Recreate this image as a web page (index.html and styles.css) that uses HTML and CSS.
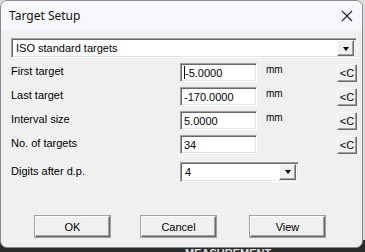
FILE: index.html
```html
<!DOCTYPE html>
<html>
<head>
<meta charset="utf-8">
<link rel="stylesheet" href="styles.css">
</head>
<body>
<div class="window">
  <div class="titlebar">
    <span class="title">Target Setup</span>
    <svg class="close" width="12" height="12" viewBox="0 0 12 12"><path d="M1 1L11 11M11 1L1 11" stroke="#222" stroke-width="1.1" fill="none"/></svg>
  </div>
  <div class="content">
    <div class="combo wide">
      <span class="combo-text">ISO standard targets</span>
      <span class="arrow-btn"><span class="tri"></span></span>
    </div>
    <div class="grid">
      <span class="label">First target</span>
      <span class="field"><span class="caret"></span>-5.0000</span>
      <span class="unit">mm</span>
      <span class="cbtn">&lt;C</span>

      <span class="label">Last target</span>
      <span class="field">-170.0000</span>
      <span class="unit">mm</span>
      <span class="cbtn">&lt;C</span>

      <span class="label">Interval size</span>
      <span class="field">5.0000</span>
      <span class="unit">mm</span>
      <span class="cbtn">&lt;C</span>

      <span class="label">No. of targets</span>
      <span class="field">34</span>
      <span class="unit"></span>
      <span class="cbtn">&lt;C</span>

      <span class="label last">Digits after d.p.</span>
      <div class="combo small last">
        <span class="combo-text">4</span>
        <span class="arrow-btn"><span class="tri"></span></span>
      </div>
    </div>
    <div class="buttons">
      <span class="btn">OK</span>
      <span class="btn">Cancel</span>
      <span class="btn">View</span>
    </div>
  </div>
</div>
<div class="behind"><span>MEASUREMENT</span></div>
</body>
</html>
```

FILE: styles.css
```css
html, body {
  margin: 0;
  padding: 0;
}
body {
  width: 365px;
  height: 252px;
  overflow: hidden;
  background: #dcdcdc;
  font-family: "Liberation Sans", Arial, sans-serif;
  font-size: 11px;
  color: #000;
  position: relative;
}
.window {
  position: relative;
  z-index: 1;
  width: 363px;
  height: 248px;
  box-sizing: border-box;
  border: 1px solid #8a8a8a;
  border-radius: 7px;
  background: #f0f0f0;
  overflow: hidden;
}
.titlebar {
  height: 29px;
  background: #f7f8fb;
  display: flex;
  align-items: center;
  justify-content: space-between;
  padding: 0 7px 0 8px;
}
.title {
  font-family: "Noto Sans", "Liberation Sans", sans-serif;
  font-size: 12px;
  color: #111;
}
.close {
  margin-right: 2px;
}
.content {
  padding: 8px 0 0 10px;
}
.combo {
  display: flex;
  align-items: center;
  justify-content: space-between;
  background: #fff;
  box-sizing: border-box;
  border-top: 1px solid #a0a0a0;
  border-left: 1px solid #a0a0a0;
  border-right: 1px solid #fff;
  border-bottom: 1px solid #fff;
  box-shadow: inset 1px 1px 0 #696969, inset -1px -1px 0 #e3e3e3;
  padding: 0 2px 0 4px;
}
.combo.wide {
  width: 346px;
  height: 20px;
}
.combo.small {
  width: 119px;
  height: 20px;
}
.combo-text {
  line-height: 14px;
}
.arrow-btn {
  width: 17px;
  height: 16px;
  box-sizing: border-box;
  background: #f0f0f0;
  border-top: 1px solid #fff;
  border-left: 1px solid #fff;
  border-right: 1px solid #696969;
  border-bottom: 1px solid #696969;
  box-shadow: inset -1px -1px 0 #a0a0a0;
  display: flex;
  align-items: center;
  justify-content: center;
}
.tri {
  width: 0;
  height: 0;
  border-left: 3.5px solid transparent;
  border-right: 3.5px solid transparent;
  border-top: 4px solid #000;
  margin-top: 1px;
}
.grid {
  display: grid;
  grid-template-columns: 169px 77px 80px 20px;
  grid-auto-rows: 19px;
  row-gap: 5px;
  align-items: center;
  margin-top: 5px;
}
.label {
  line-height: 14px;
  align-self: start;
  margin-top: 1px;
}
.field {
  height: 19px;
  box-sizing: border-box;
  background: #fff;
  border-top: 1px solid #a0a0a0;
  border-left: 1px solid #a0a0a0;
  border-right: 1px solid #fff;
  border-bottom: 1px solid #fff;
  box-shadow: inset 1px 1px 0 #696969, inset -1px -1px 0 #e3e3e3;
  padding: 2px 0 0 3px;
  line-height: 14px;
  display: flex;
  align-items: flex-start;
}
.caret {
  width: 1px;
  height: 13px;
  background: #000;
  margin-top: 0;
}
.unit {
  padding-left: 9px;
  font-size: 10px;
  align-self: start;
  margin-top: 1px;
}
.cbtn {
  width: 20px;
  height: 18px;
  box-sizing: border-box;
  background: #f0f0f0;
  border-top: 1px solid #fff;
  border-left: 1px solid #fff;
  border-right: 1px solid #696969;
  border-bottom: 1px solid #696969;
  box-shadow: inset -1px -1px 0 #a0a0a0;
  display: flex;
  align-items: center;
  justify-content: center;
  font-size: 11px;
}
.label.last {
  margin-top: 5px;
  align-self: start;
}
.combo.last {
  margin-top: 6px;
  grid-column: 2 / span 2;
}
.buttons {
  display: flex;
  gap: 31px;
  padding-left: 24px;
  margin-top: 38px;
}
.btn {
  width: 75px;
  height: 21px;
  box-sizing: border-box;
  background: #f0f0f0;
  border-top: 1px solid #fff;
  border-left: 1px solid #fff;
  border-right: 1px solid #696969;
  border-bottom: 1px solid #696969;
  box-shadow: inset -1px -1px 0 #a0a0a0, 0 0 0 1px #a0a0a0;
  display: flex;
  align-items: center;
  justify-content: center;
}
.btn + .btn + .btn {
  margin-left: 3px;
}
.behind {
  position: absolute;
  left: 0;
  top: 240px;
  width: 365px;
  height: 12px;
  background: #2b2b2b;
  color: #ddd;
  font-size: 11px;
  font-weight: bold;
  overflow: hidden;
}
.behind span {
  position: absolute;
  left: 185px;
  top: 7px;
  line-height: 12px;
}
```
